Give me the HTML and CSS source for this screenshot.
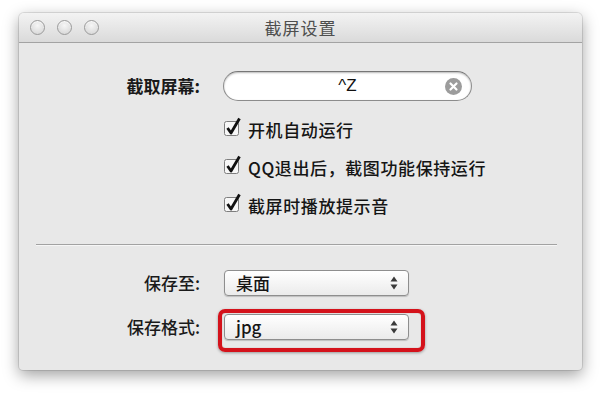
FILE: index.html
```html
<!DOCTYPE html>
<html lang="zh-CN">
<head>
<meta charset="utf-8">
<title>截屏设置</title>
<link rel="stylesheet" href="styles.css">
</head>
<body>
<div class="window">
  <div class="titlebar">
    <div class="lights">
      <span class="light"></span><span class="light"></span><span class="light"></span>
    </div>
    <div class="title">截屏设置</div>
    <div></div>
  </div>
  <div class="content">
    <div class="top">
      <div class="label strong">截取屏幕:</div>
      <div class="field">
        <span class="field-text">^Z</span>
        <span class="clear">
          <svg width="17" height="17" viewBox="0 0 17 17"><circle cx="8.5" cy="8.5" r="8.5" fill="#9c9c9c"/><path d="M5.5 5.5 L11.5 11.5 M11.5 5.5 L5.5 11.5" stroke="#fff" stroke-width="2.2" stroke-linecap="round"/></svg>
        </span>
      </div>
      <div></div>
      <ul class="checks">
        <li class="check"><svg class="cbx" width="20" height="20" viewBox="0 0 20 20"><rect x="1.5" y="4.5" width="14" height="14" rx="2" fill="#f7f7f7" stroke="#7e7e7e"/><path d="M4.5 11 L8 16 L16.5 1.5" fill="none" stroke="#111" stroke-width="2.8" stroke-linejoin="round"/></svg><span>开机自动运行</span></li>
        <li class="check"><svg class="cbx" width="20" height="20" viewBox="0 0 20 20"><rect x="1.5" y="4.5" width="14" height="14" rx="2" fill="#f7f7f7" stroke="#7e7e7e"/><path d="M4.5 11 L8 16 L16.5 1.5" fill="none" stroke="#111" stroke-width="2.8" stroke-linejoin="round"/></svg><span>QQ退出后，截图功能保持运行</span></li>
        <li class="check"><svg class="cbx" width="20" height="20" viewBox="0 0 20 20"><rect x="1.5" y="4.5" width="14" height="14" rx="2" fill="#f7f7f7" stroke="#7e7e7e"/><path d="M4.5 11 L8 16 L16.5 1.5" fill="none" stroke="#111" stroke-width="2.8" stroke-linejoin="round"/></svg><span>截屏时播放提示音</span></li>
      </ul>
    </div>
    <div class="separator"></div>
    <div class="bottom">
      <div class="label">保存至:</div>
      <div class="popup">
        <span class="popup-text">桌面</span>
        <svg class="arrows" width="8" height="14" viewBox="0 0 8 14"><path d="M4 0.5 L7.5 5.5 L0.5 5.5 Z M0.5 8.5 L7.5 8.5 L4 13.5 Z" fill="#3a3a3a"/></svg>
      </div>
      <div class="label">保存格式:</div>
      <div class="popup-wrap">
        <div class="popup">
          <span class="popup-text">jpg</span>
          <svg class="arrows" width="8" height="14" viewBox="0 0 8 14"><path d="M4 0.5 L7.5 5.5 L0.5 5.5 Z M0.5 8.5 L7.5 8.5 L4 13.5 Z" fill="#3a3a3a"/></svg>
        </div>
        <div class="highlight"></div>
      </div>
    </div>
  </div>
</div>
</body>
</html>
```

FILE: styles.css
```css
html, body {
  margin: 0;
  padding: 0;
  background: #ffffff;
}
body {
  width: 600px;
  height: 398px;
  overflow: hidden;
  font-family: "Noto Sans CJK SC", "Liberation Sans", sans-serif;
  color: #151515;
}
.window {
  margin: 13px 0 0 19px;
  width: 563px;
  height: 357px;
  background: #e8e8e8;
  border-radius: 5px 5px 4px 4px;
  box-shadow: 0 5px 16px rgba(0, 0, 0, 0.38), 0 0 0 1px rgba(0, 0, 0, 0.1);
}
.titlebar {
  height: 29px;
  border-bottom: 1px solid #a3a3a3;
  border-radius: 5px 5px 0 0;
  background: linear-gradient(#f3f3f3, #dadada);
  display: grid;
  grid-template-columns: 1fr auto 1fr;
  align-items: center;
}
.lights {
  display: flex;
  gap: 12px;
  padding-left: 11px;
}
.light {
  width: 13px;
  height: 13px;
  border-radius: 50%;
  border: 1px solid #9a9a9a;
  background: radial-gradient(circle at 50% 35%, #f6f6f6, #d2d2d2);
  box-shadow: inset 0 1px 1px rgba(255, 255, 255, 0.8);
}
.title {
  font-size: 17px;
  letter-spacing: 1px;
  color: #4e4e4e;
  line-height: 29px;
}
.content {
  padding-top: 28px;
}
.top {
  display: grid;
  grid-template-columns: 181px 1fr;
  column-gap: 23px;
  align-items: center;
}
.label {
  text-align: right;
  font-size: 17px;
  font-weight: 500;
  color: #1a1a1a;
  line-height: 20px;
}
.label.strong {
  font-weight: bold;
}
.field {
  width: 247px;
  height: 28px;
  border: 1px solid #8c8c8c;
  border-top-color: #777;
  border-radius: 15px;
  background: #ffffff;
  box-shadow: inset 0 1px 2px rgba(0, 0, 0, 0.28);
  display: flex;
  align-items: center;
  justify-content: center;
  position: relative;
}
.field-text {
  font-family: "Liberation Sans", "DejaVu Sans", sans-serif;
  font-size: 17px;
  color: #111;
}
.clear {
  position: absolute;
  right: 9px;
  top: 6px;
  width: 17px;
  height: 17px;
}
.clear svg {
  display: block;
}
.checks {
  list-style: none;
  margin: 9px 0 0 0;
  padding: 0;
}
.check {
  height: 38px;
  display: flex;
  align-items: center;
  font-size: 17px;
  font-weight: 500;
  letter-spacing: 0.6px;
  color: #151515;
}
.cbx {
  display: block;
  flex: none;
  margin-right: 5px;
  margin-top: -4px;
}
.separator {
  margin: 20px 25px 0 17px;
  height: 1px;
  background: #a2a2a2;
  border-bottom: 1px solid #f6f6f6;
}
.bottom {
  margin-top: 24px;
  display: grid;
  grid-template-columns: 181px 185px;
  column-gap: 24px;
  row-gap: 18px;
  align-items: center;
}
.popup-wrap {
  position: relative;
}
.popup {
  box-sizing: border-box;
  width: 185px;
  height: 26px;
  border: 1px solid #8e8e8e;
  border-radius: 4px;
  background: linear-gradient(#ffffff, #f3f3f3 60%, #ebebeb);
  box-shadow: 0 1px 1px rgba(0, 0, 0, 0.18);
  display: flex;
  align-items: center;
  justify-content: space-between;
  padding: 0 10px 0 11px;
}
.popup-text {
  font-size: 17px;
  font-weight: 500;
  color: #151515;
  line-height: 20px;
}
.arrows {
  display: block;
}
.highlight {
  position: absolute;
  top: -5px;
  left: -6px;
  right: -16px;
  bottom: -12px;
  border: 4px solid #d4121b;
  border-radius: 7px;
  box-shadow: 0 1px 3px rgba(0, 0, 0, 0.35), inset 0 0 1px rgba(120, 0, 0, 0.5);
}
```
